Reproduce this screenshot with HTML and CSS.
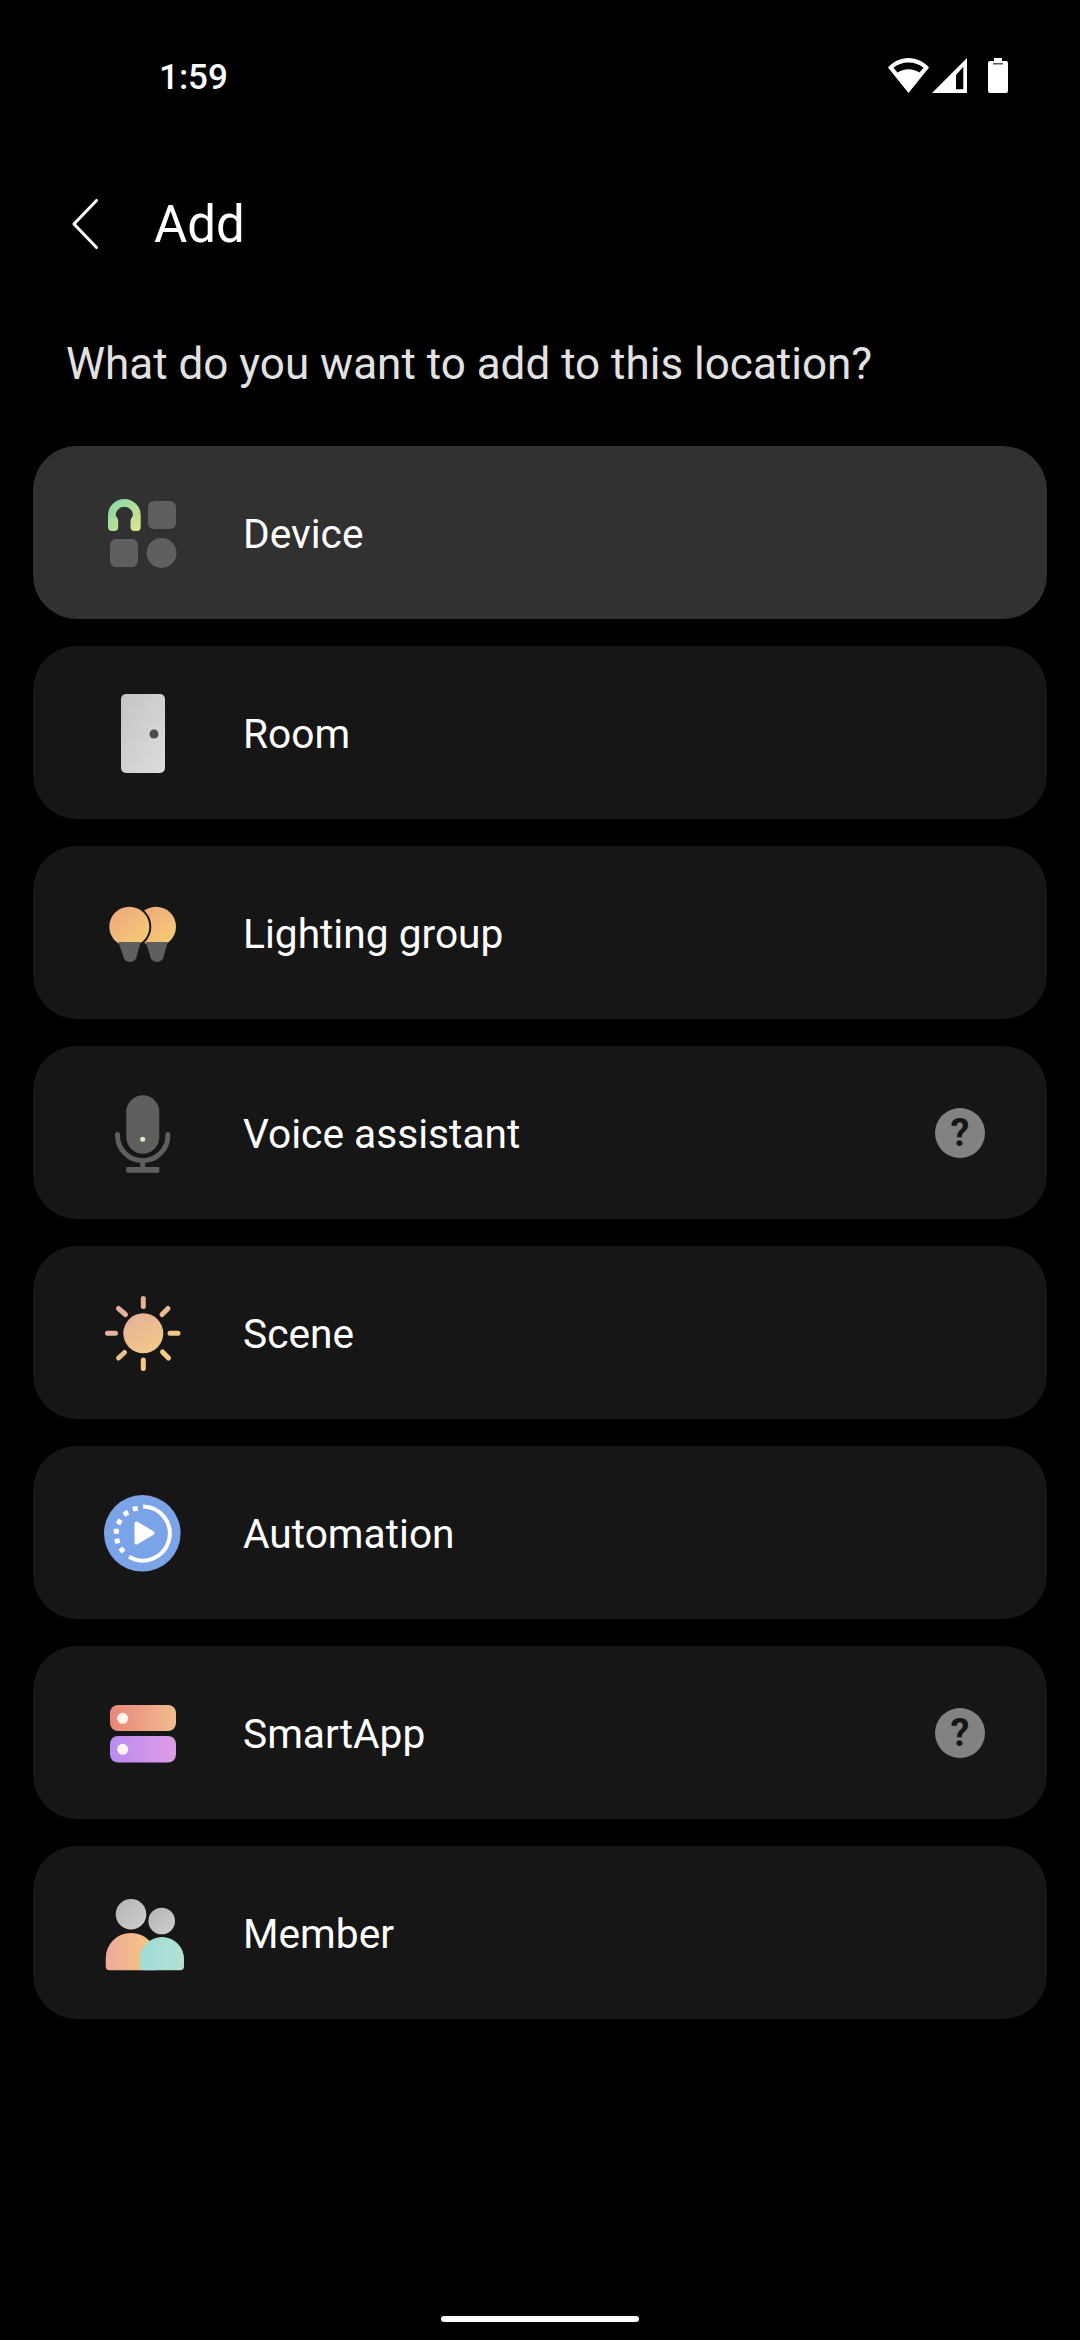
FILE: index.html
```html
<!DOCTYPE html>
<html lang="en">
<head>
  <meta charset="UTF-8" />
  <meta name="viewport" content="width=device-width, initial-scale=1.0"/>
  <title>Add</title>
  <link rel="stylesheet" href="styles.css">
</head>
<body>

  <div class="status-bar">
    <span class="clock">1:59</span>
    <div class="status-icons">
      <svg class="ic-wifi" width="41" height="35" viewBox="0 0 41 35">
        <path fill="#fff" d="M20.5 35 0 9.5C5.500 3.500 12.500 0 20.500 0S35.500 3.500 41 9.500Z"/>
        <path fill="#000" d="M5.500 9.800C9.500 6.500 14.500 4.500 20.500 4.500S31.500 6.500 35.500 9.800L31.500 14.600C28.500 12.600 25 11.300 20.500 11.300S12.500 12.600 9.500 14.600Z"/>
      </svg>
      <svg class="ic-signal" width="35" height="35" viewBox="0 0 35 35">
        <path fill="#fff" d="M35 0V35H0Z"/>
        <path fill="#000" d="M24 17 31.300 8.700V31.300H24Z"/>
      </svg>
      <svg class="ic-battery" width="20" height="35" viewBox="0 0 20 35">
        <path fill="#fff" d="M6 0H14V3H18Q20 3 20 5V33Q20 35 18 35H2Q0 35 0 33V5Q0 3 2 3H6Z"/>
        <rect x="5" y="5" width="10" height="1.500" fill="#555"/>
      </svg>
    </div>
  </div>

  <header class="top-bar">
    <svg class="back" width="26" height="50" viewBox="0 0 26 50">
      <path d="M24.500 1.500 2 25 24.500 48.500" fill="none" stroke="#fff" stroke-width="3" stroke-linecap="round" stroke-linejoin="round"/>
    </svg>
    <h1>Add</h1>
  </header>

  <p class="question">What do you want to add to this location?</p>

  <div class="list">

    <div class="row selected">
      <svg class="icon" width="90" height="90" viewBox="0 0 90 90">
        <defs>
          <linearGradient id="g-phones" x1="0" y1="0" x2="1" y2="1">
            <stop offset="0" stop-color="#7fd6a8"/>
            <stop offset="1" stop-color="#e0e58e"/>
          </linearGradient>
        </defs>
        <path d="M10 27A16.350 16 0 0 1 42.700 27V39Q42.700 43 38.700 43H36.500Q32.500 43 32.500 39V33C32.500 30 35 29 35 26A8.700 8 0 0 0 17.700 26C17.700 29 20.200 30 20.200 33V39Q20.200 43 16.200 43H14Q10 43 10 39Z" fill="url(#g-phones)"/>
        <rect x="50" y="13" width="28" height="28" rx="6" fill="#5f5f5f"/>
        <rect x="12" y="51" width="28" height="28" rx="6" fill="#5f5f5f"/>
        <circle cx="63.500" cy="65" r="15" fill="#5f5f5f"/>
      </svg>
      <span class="label">Device</span>
    </div>

    <div class="row">
      <svg class="icon" width="90" height="90" viewBox="0 0 90 90">
        <defs>
          <linearGradient id="g-door" x1="0" y1="0" x2="1" y2="1">
            <stop offset="0" stop-color="#c4c4c4"/>
            <stop offset="1" stop-color="#dddddd"/>
          </linearGradient>
        </defs>
        <rect x="23" y="6" width="44" height="79" rx="5" fill="url(#g-door)"/>
        <circle cx="56" cy="46" r="4.500" fill="#4a4a4a"/>
      </svg>
      <span class="label">Room</span>
    </div>

    <div class="row">
      <svg class="icon" width="90" height="90" viewBox="0 0 90 90">
        <defs>
          <linearGradient id="g-bulb" x1="0" y1="0" x2="1" y2="1">
            <stop offset="0" stop-color="#eda582"/>
            <stop offset="1" stop-color="#f6cf72"/>
          </linearGradient>
        </defs>
        <circle cx="58" cy="38.700" r="20" fill="url(#g-bulb)"/>
        <circle cx="31.300" cy="38.700" r="22" fill="#161616"/>
        <circle cx="31.300" cy="38.700" r="20" fill="url(#g-bulb)"/>
        <path d="M47.700 54H69.700L66 67A7 7 0 0 1 52 67Z" fill="#5f5f5f"/>
        <path d="M20.300 54H42.700L39 67A7 7 0 0 1 25 67Z" fill="#5f5f5f"/>
      </svg>
      <span class="label">Lighting group</span>
    </div>

    <div class="row">
      <svg class="icon" width="90" height="90" viewBox="0 0 90 90">
        <rect x="28.300" y="7.300" width="33" height="58.400" rx="16.500" fill="#5f5f5f"/>
        <circle cx="44.700" cy="51.300" r="2.500" fill="#d6f2c8"/>
        <path d="M19.500 46.500V47.500a25.200 25.200 0 0 0 50.400 0V46.500" fill="none" stroke="#5f5f5f" stroke-width="5" stroke-linecap="round"/>
        <path d="M44.700 72V82" stroke="#5f5f5f" stroke-width="5"/>
        <rect x="28.300" y="79" width="33" height="5.700" rx="1" fill="#5f5f5f"/>
      </svg>
      <span class="label">Voice assistant</span>
      <span class="help">?</span>
    </div>

    <div class="row">
      <svg class="icon" width="90" height="90" viewBox="0 0 90 90">
        <defs>
          <linearGradient id="g-sun" gradientUnits="userSpaceOnUse" x1="15" y1="10" x2="70" y2="82">
            <stop offset="0" stop-color="#dfa6a4"/>
            <stop offset="1" stop-color="#f7d47e"/>
          </linearGradient>
        </defs>
        <circle cx="45.300" cy="45.300" r="20" fill="url(#g-sun)"/>
        <path d="M45.300 10.500V18.500M45.300 72V80.500M9.500 45.300H17.500M72 45.300H80M20.500 20.500 27.500 26.500M70 20.500 64 26.500M20.500 70 26.500 64.500M70.500 70 64.500 64" fill="none" stroke="url(#g-sun)" stroke-width="5" stroke-linecap="round"/>
      </svg>
      <span class="label">Scene</span>
    </div>

    <div class="row">
      <svg class="icon" width="90" height="90" viewBox="0 0 90 90">
        <circle cx="44.300" cy="45.300" r="38.300" fill="#7ba3e8"/>
        <path d="M45 18.500A27 27 0 1 1 31 68.700" fill="none" stroke="#fff" stroke-width="4"/>
        <g fill="#fff">
          <rect x="34.800" y="18.200" width="5" height="5" transform="rotate(-10 37.300 20.700)"/>
          <rect x="25.500" y="22.800" width="5" height="5" transform="rotate(-30 28 25.300)"/>
          <rect x="18.800" y="31.500" width="5" height="5" transform="rotate(-60 21.300 34)"/>
          <rect x="15.800" y="40.800" width="5" height="5"/>
          <rect x="16.800" y="50.500" width="5" height="5" transform="rotate(-15 19.300 53)"/>
          <rect x="21.500" y="59.500" width="5" height="5" transform="rotate(-40 24 62)"/>
        </g>
        <path d="M38.500 35.500 54.500 45 38.500 54.500Z" fill="#fff" stroke="#fff" stroke-width="4" stroke-linejoin="round"/>
      </svg>
      <span class="label">Automation</span>
    </div>

    <div class="row">
      <svg class="icon" width="90" height="90" viewBox="0 0 90 90">
        <defs>
          <linearGradient id="g-app-a">
            <stop offset="0" stop-color="#e9857a"/>
            <stop offset="1" stop-color="#f0bd8e"/>
          </linearGradient>
          <linearGradient id="g-app-b">
            <stop offset="0" stop-color="#b98bf0"/>
            <stop offset="1" stop-color="#e09ce6"/>
          </linearGradient>
        </defs>
        <rect x="12" y="17" width="66" height="26" rx="8" fill="url(#g-app-a)"/>
        <rect x="12" y="48" width="66" height="26.500" rx="8" fill="url(#g-app-b)"/>
        <circle cx="24.700" cy="30.300" r="5.500" fill="#fff4ee"/>
        <circle cx="24.700" cy="61.300" r="5.500" fill="#fff4ee"/>
      </svg>
      <span class="label">SmartApp</span>
      <span class="help">?</span>
    </div>

    <div class="row">
      <svg class="icon" width="90" height="90" viewBox="0 0 90 90">
        <defs>
          <linearGradient id="g-head" x1="0" y1="0" x2="1" y2="1">
            <stop offset="0" stop-color="#b4b4b4"/>
            <stop offset="1" stop-color="#cfcfcf"/>
          </linearGradient>
          <linearGradient id="g-body-a">
            <stop offset="0" stop-color="#eea99c"/>
            <stop offset="1" stop-color="#f5cb7c"/>
          </linearGradient>
          <linearGradient id="g-body-b">
            <stop offset="0" stop-color="#a0dcd8"/>
            <stop offset="1" stop-color="#b2e0d4"/>
          </linearGradient>
        </defs>
        <circle cx="33" cy="26.300" r="15.300" fill="url(#g-head)"/>
        <circle cx="63.700" cy="33" r="13.300" fill="url(#g-head)"/>
        <path d="M7.700 70.200A25.300 25.300 0 0 1 58.300 70.200V82.300H11.700Q7.700 82.300 7.700 78.300Z" fill="url(#g-body-a)"/>
        <path d="M42 71A22 22 0 0 1 86 71V78.300Q86 82.300 82 82.300H46Q42 82.300 42 78.300Z" fill="url(#g-body-b)"/>
      </svg>
      <span class="label">Member</span>
    </div>

  </div>

  <div class="home-bar"></div>

</body>
</html>
```

FILE: styles.css
```css
* {
  box-sizing: border-box;
}

html, body {
  margin: 0;
  height: 2340px;
  background: #000;
}

body {
  display: flex;
  flex-direction: column;
  font-family: Roboto, 'Noto Sans', sans-serif;
  color: #fff;
  overflow: hidden;
}

.status-bar {
  display: flex;
  justify-content: space-between;
  align-items: center;
  height: 57px;
  margin-top: 47px;
  padding: 0 72px 0 159px;
}

.clock {
  padding-top: 4px;
  font-size: 35px;
  font-weight: 500;
}

.status-icons {
  display: flex;
  align-items: center;
  gap: 3px;
}

.ic-battery {
  margin-left: 18px;
}

.top-bar {
  display: flex;
  align-items: center;
  height: 60px;
  margin-top: 90px;
  padding-left: 72px;
}

.top-bar h1 {
  margin: 0 0 0 56px;
  font-size: 51px;
  font-weight: 400;
}

.back {
  flex: none;
}

.question {
  margin: 85px 0 0 66px;
  font-size: 44px;
  line-height: 50px;
  color: #e2e2e2;
}

.list {
  display: flex;
  flex-direction: column;
  gap: 27px;
  margin: 57px 33px 0;
}

.row {
  display: flex;
  align-items: center;
  height: 173px;
  padding: 0 62px 0 65px;
  background: #161616;
  border-radius: 44px;
}

.row.selected {
  background: #313131;
}

.icon {
  flex: none;
}

.label {
  flex: 1;
  margin-left: 55px;
  padding-top: 3px;
  font-size: 40.700px;
}

.help {
  display: flex;
  justify-content: center;
  align-items: center;
  width: 50px;
  height: 50px;
  border-radius: 50%;
  background: #828282;
  color: #161616;
  font-size: 38px;
  font-weight: 700;
}

.home-bar {
  width: 198px;
  height: 6px;
  margin: auto auto 18px;
  border-radius: 3px;
  background: #fff;
}
```
